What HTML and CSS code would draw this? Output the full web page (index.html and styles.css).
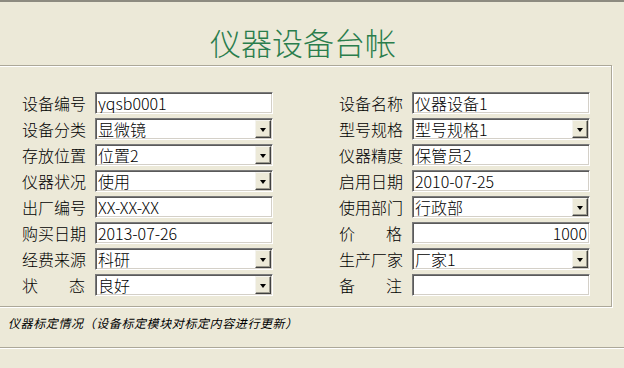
FILE: index.html
```html
<!DOCTYPE html>
<html lang="zh-CN">
<head>
<meta charset="utf-8">
<title>仪器设备台帐</title>
<link rel="stylesheet" href="styles.css">
</head>
<body>
<header class="top">
  <h1 class="title">仪器设备台帐</h1>
</header>
<section class="panel">
  <div class="col">
    <div class="row"><span class="lbl">设备编号</span><div class="field">yqsb0001</div></div>
    <div class="row"><span class="lbl">设备分类</span><div class="field combo"><span class="val">显微镜</span><span class="btn"></span></div></div>
    <div class="row"><span class="lbl">存放位置</span><div class="field combo"><span class="val">位置2</span><span class="btn"></span></div></div>
    <div class="row"><span class="lbl">仪器状况</span><div class="field combo"><span class="val">使用</span><span class="btn"></span></div></div>
    <div class="row"><span class="lbl">出厂编号</span><div class="field">XX-XX-XX</div></div>
    <div class="row"><span class="lbl">购买日期</span><div class="field">2013-07-26</div></div>
    <div class="row"><span class="lbl">经费来源</span><div class="field combo"><span class="val">科研</span><span class="btn"></span></div></div>
    <div class="row"><span class="lbl spread"><span>状</span><span>态</span></span><div class="field combo"><span class="val">良好</span><span class="btn"></span></div></div>
  </div>
  <div class="col">
    <div class="row"><span class="lbl">设备名称</span><div class="field">仪器设备1</div></div>
    <div class="row"><span class="lbl">型号规格</span><div class="field combo"><span class="val">型号规格1</span><span class="btn"></span></div></div>
    <div class="row"><span class="lbl">仪器精度</span><div class="field">保管员2</div></div>
    <div class="row"><span class="lbl">启用日期</span><div class="field">2010-07-25</div></div>
    <div class="row"><span class="lbl">使用部门</span><div class="field combo"><span class="val">行政部</span><span class="btn"></span></div></div>
    <div class="row"><span class="lbl spread"><span>价</span><span>格</span></span><div class="field num">1000</div></div>
    <div class="row"><span class="lbl">生产厂家</span><div class="field combo"><span class="val">厂家1</span><span class="btn"></span></div></div>
    <div class="row"><span class="lbl spread"><span>备</span><span>注</span></span><div class="field"></div></div>
  </div>
</section>
<p class="caption">仪器标定情况（设备标定模块对标定内容进行更新）</p>
<section class="lower"></section>
</body>
</html>
```
FILE: styles.css
```css
html, body {
  margin: 0;
  padding: 0;
}
body {
  background: #ECE9D8;
  font-family: "Noto Sans CJK SC", sans-serif;
  font-weight: 300;
  color: #000;
  border-top: 2px solid #8D8B80;
  height: 366px;
  overflow: hidden;
}
.top {
  height: 63px;
  display: flex;
  justify-content: center;
  padding-right: 18px;
  box-sizing: border-box;
}
.title {
  margin: 0;
  padding-top: 24px;
  font-size: 31px;
  line-height: 32px;
  font-weight: 300;
  color: #2A7D4C;
}
.panel {
  margin-left: -2px;
  width: 614px;
  box-sizing: border-box;
  border: 1px solid #ACA899;
  box-shadow: inset 1px 1px 0 #fff, 1px 1px 0 #fff;
  padding: 26px 0 10px 23px;
  display: flex;
  gap: 66px;
}
.col {
  display: flex;
  flex-direction: column;
  gap: 4px;
}
.row {
  display: flex;
  align-items: center;
  gap: 8px;
  height: 22px;
}
.lbl {
  width: 65px;
  font-size: 16px;
  line-height: 22px;
  white-space: nowrap;
}
.spread {
  display: flex;
  justify-content: space-between;
  padding-right: 2px;
  box-sizing: border-box;
}
.field {
  width: 178px;
  height: 22px;
  box-sizing: border-box;
  background: #fff;
  border: 1px solid;
  border-color: #7A7A7A #fff #fff #7A7A7A;
  box-shadow: inset 1px 1px 0 #5A5A5A, inset -1px -1px 0 #D4D0C8;
  font-size: 16px;
  line-height: 20px;
  padding: 0 2px 0 2px;
  white-space: nowrap;
  overflow: hidden;
}
.num {
  text-align: right;
}
.combo {
  display: flex;
  justify-content: space-between;
  padding: 1px;
}
.val {
  line-height: 18px;
  padding-left: 1px;
}
.btn {
  width: 16px;
  height: 18px;
  flex: none;
  box-sizing: border-box;
  background: #ECE9D8;
  border: 1px solid;
  border-color: #F4F3EE #404040 #404040 #F4F3EE;
  box-shadow: inset -1px -1px 0 #9D9B8F;
  display: flex;
  align-items: center;
  justify-content: center;
}
.btn::after {
  content: "";
  width: 0;
  height: 0;
  border-left: 3.5px solid transparent;
  border-right: 3.5px solid transparent;
  border-top: 4px solid #000;
  margin-top: 1px;
}
.caption {
  margin: 0;
  height: 40px;
  box-sizing: border-box;
  padding: 8px 0 0 8px;
  font-size: 12px;
  line-height: 16px;
  font-weight: 400;
  font-style: italic;
  letter-spacing: 0.6px;
}
.lower {
  border-top: 1px solid #ACA899;
  box-shadow: inset 0 1px 0 #fff;
  height: 30px;
}
```
